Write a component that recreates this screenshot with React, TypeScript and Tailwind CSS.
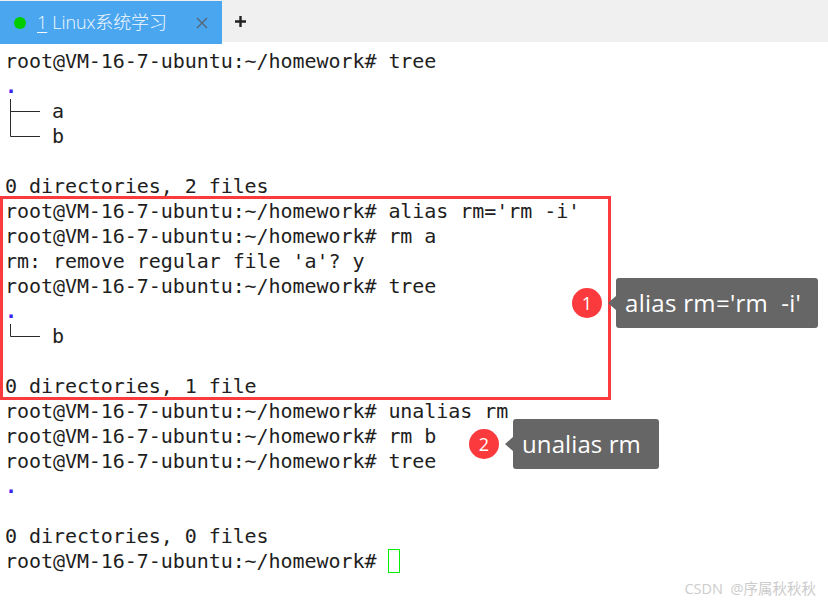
type Line = { t: string; dot?: boolean; branch?: "mid" | "end" };

const lines: Line[] = [
  { t: "root@VM-16-7-ubuntu:~/homework# tree" },
  { t: ".", dot: true },
  { t: "a", branch: "mid" },
  { t: "b", branch: "end" },
  { t: "" },
  { t: "0 directories, 2 files" },
  { t: "root@VM-16-7-ubuntu:~/homework# alias rm='rm -i'" },
  { t: "root@VM-16-7-ubuntu:~/homework# rm a" },
  { t: "rm: remove regular file 'a'? y" },
  { t: "root@VM-16-7-ubuntu:~/homework# tree" },
  { t: ".", dot: true },
  { t: "b", branch: "end" },
  { t: "" },
  { t: "0 directories, 1 file" },
  { t: "root@VM-16-7-ubuntu:~/homework# unalias rm" },
  { t: "root@VM-16-7-ubuntu:~/homework# rm b" },
  { t: "root@VM-16-7-ubuntu:~/homework# tree" },
  { t: ".", dot: true },
  { t: "" },
  { t: "0 directories, 0 files" },
];

function Branch({ kind }: { kind: "mid" | "end" }) {
  return (
    <svg width="47" height="25" viewBox="0 0 47 25" className="shrink-0">
      <path
        d={kind === "mid" ? "M5.5 0V25M5.5 12.5H35" : "M5.5 0V12.5H35"}
        stroke="#2a2a2a"
        strokeWidth="1"
        fill="none"
      />
    </svg>
  );
}

function Callout({ n, text, className, boxClass }: { n: string; text: string; className: string; boxClass: string }) {
  return (
    <div className={"absolute flex items-center " + className}>
      <div className="w-[30px] h-[30px] rounded-full bg-[#fb3a3e] text-white flex items-center justify-center text-[18px] font-['Open_Sans',sans-serif]">
        {n}
      </div>
      <div className="ml-[6px] w-0 h-0 border-y-[7px] border-y-transparent border-r-[8px] border-r-[#666666]" />
      <div className={"h-[50px] bg-[#666666] rounded-[3px] text-white flex items-center whitespace-pre text-[24px] font-['Open_Sans',sans-serif] " + boxClass}>
        {text}
      </div>
    </div>
  );
}

export default function App() {
  return (
    <div className="relative w-[828px] h-[605px] bg-white overflow-hidden">
      <div className="flex h-[44px] bg-white">
        <div className="flex h-[42px] w-full bg-[#f0f0f0]">
          <div className="flex items-center w-[222px] h-[43px] mt-px bg-[#4aa6ef] pl-[14px] shrink-0 font-['Open_Sans','Noto_Sans_CJK_SC',sans-serif] font-light text-[#f4f9fe] text-[18px]">
            <span className="w-[12px] h-[12px] rounded-full bg-[#00cc00]" />
            <span className="ml-[11px] underline underline-offset-[3px]">1</span>
            <span className="ml-[5px] tracking-[-0.1px]">Linux系统学习</span>
            <svg className="ml-auto mr-[14px]" width="12" height="12" viewBox="0 0 12 12">
              <path d="M1 1L11 11M11 1L1 11" stroke="#5a6470" strokeWidth="1.3" fill="none" />
            </svg>
          </div>
          <svg className="ml-[12px] mt-[15px]" width="13" height="13" viewBox="0 0 13 13">
            <path d="M6.5 1V12M1 6.5H12" stroke="#222" strokeWidth="2.4" fill="none" />
          </svg>
        </div>
      </div>

      <div className="pt-[5px] pl-[5px] font-['DejaVu_Sans_Mono',monospace] text-[20px] tracking-[-0.06px] leading-[25px] text-[#1e1e1e] whitespace-pre">
        {lines.map((l, i) =>
          l.branch ? (
            <div key={i} className="flex h-[25px]">
              <Branch kind={l.branch} />
              <span>{l.t}</span>
            </div>
          ) : (
            <div key={i} className={"h-[25px] " + (l.dot ? "text-[#3b22f0] font-bold" : "")}>
              {l.t}
            </div>
          ),
        )}
        <div className="flex h-[25px]">
          <span>root@VM-16-7-ubuntu:~/homework# </span>
          <span className="w-[12px] h-[24px] border border-[#00f000]" />
        </div>
      </div>

      <div className="absolute left-0 top-[196px] w-[611px] h-[204px] border-[3px] border-[#fb3a3e]" />
      <Callout n="1" text="alias rm='rm  -i'" className="left-[572px] top-[278px]" boxClass="w-[202px] pl-[9px] tracking-[0.3px]" />
      <Callout n="2" text="unalias rm" className="left-[469px] top-[419px]" boxClass="w-[146px] pl-[9px] tracking-[0.1px]" />

      <div className="absolute right-[12px] top-[579px] whitespace-pre text-[14.5px] leading-[20px] text-[#cccccc] font-['Open_Sans','Noto_Sans_CJK_SC',sans-serif]">
        CSDN  @序属秋秋秋
      </div>
    </div>
  );
}
